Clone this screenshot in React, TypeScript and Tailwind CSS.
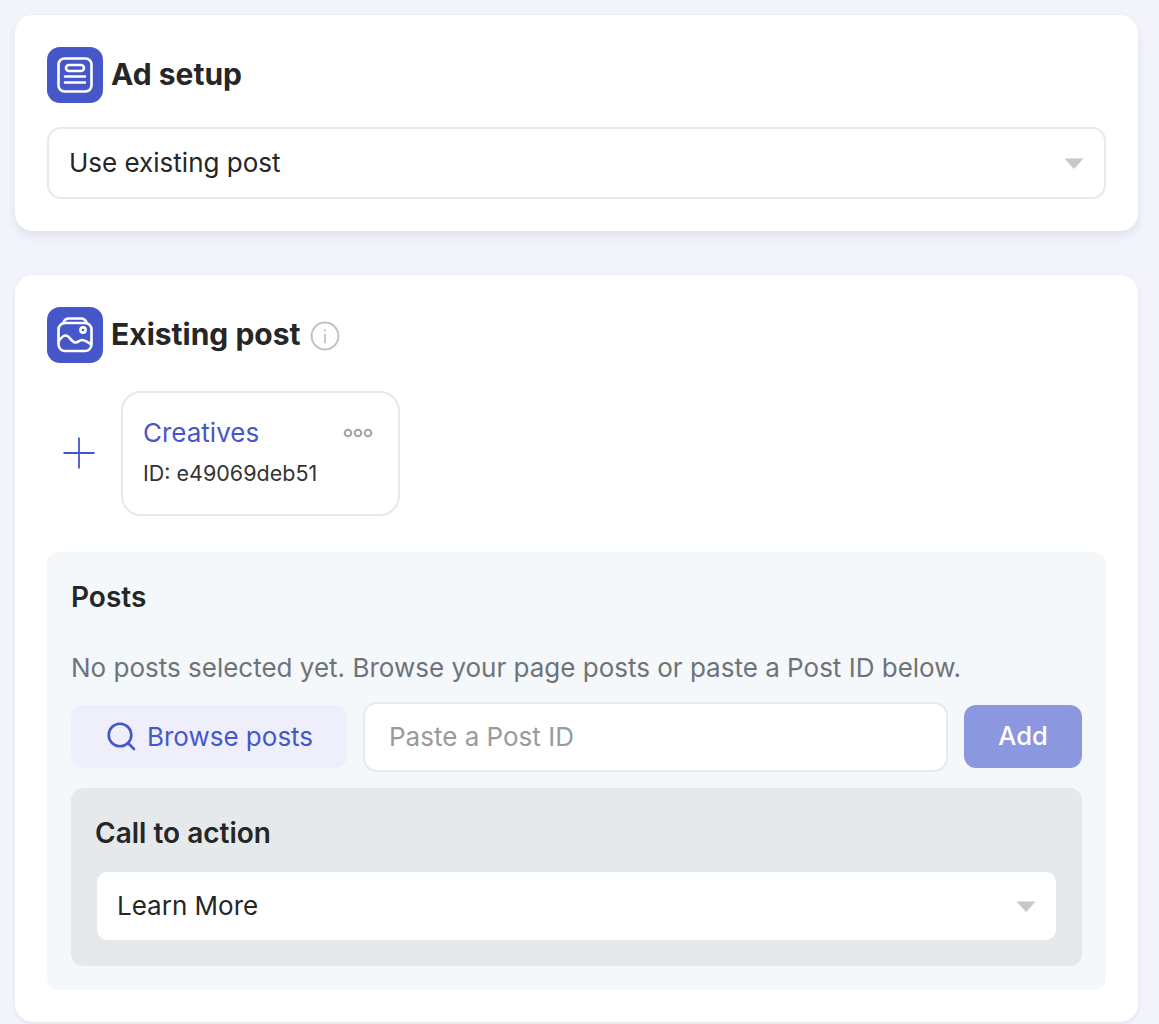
import React from "react";

const Caret = () => (
  <svg width="20" height="11" viewBox="0 0 20 11" className="block">
    <path d="M0.5 0.5H19.5L11 10Q10 11 9 10Z" fill="#c8c8c8" />
  </svg>
);

const HeaderIcon = ({ children }: { children: React.ReactNode }) => (
  <div className="flex h-14 w-14 shrink-0 items-center justify-center rounded-[13px] bg-[#4657c9]">
    <svg width="38" height="38" viewBox="0 0 38 38" fill="none" stroke="#fff" strokeWidth="2.6" strokeLinecap="round" strokeLinejoin="round">
      {children}
    </svg>
  </div>
);

export default function App() {
  return (
    <div className="min-h-[1024px] bg-[#f2f3fb] px-[15px] pt-[15px] font-['Inter',sans-serif] text-[#262626]">
      <section className="h-[216px] w-[1123px] rounded-[18px] bg-white px-8 pt-8 shadow-[0_5px_8px_rgba(40,50,90,0.09)]">
        <div className="flex items-center gap-2">
          <HeaderIcon>
            <rect x="2.5" y="2.5" width="33" height="33" rx="6" />
            <rect x="10" y="9" width="18" height="6" rx="3" />
            <path d="M9 20.5H29M9 26.5H29" />
          </HeaderIcon>
          <h2 className="mb-[2px] text-[30px] font-bold leading-9">Ad setup</h2>
        </div>
        <div className="mt-6 flex h-[72px] w-[1059px] items-center justify-between rounded-[14px] border-2 border-[#e9e9e9] pl-5 pr-5 text-[26px]">
          <span className="mb-[1px]">Use existing post</span>
          <Caret />
        </div>
      </section>

      <section className="mt-11 h-[747px] w-[1123px] rounded-[18px] bg-white px-8 pt-8 shadow-[0_2px_4px_rgba(40,50,90,0.08)]">
        <div className="flex items-center gap-2">
          <HeaderIcon>
            <path d="M7.5 6.5C8.5 3.5 10.5 2.5 13 2.5H25C27.5 2.5 29.5 3.5 30.5 6.5" />
            <rect x="2.5" y="7" width="33" height="28" rx="6.5" />
            <circle cx="27" cy="14" r="2.6" />
            <path d="M3 24.5C6 20.5 9 18.5 11.5 20C14 21.5 16 26 19 26.5C22 27 23 24 26 24C29 24 32 26.5 35 28" />
          </HeaderIcon>
          <h2 className="mb-[2px] text-[30px] font-bold leading-9">Existing post</h2>
          <svg width="30" height="30" viewBox="0 0 30 30" fill="none" className="ml-[1px] mt-[2px]">
            <circle cx="15" cy="15" r="13.4" stroke="#c4c4c4" strokeWidth="2" />
            <path d="M15 13.5V21.5" stroke="#c4c4c4" strokeWidth="1.8" strokeLinecap="round" />
            <circle cx="15" cy="9.4" r="1.2" fill="#c4c4c4" />
          </svg>
        </div>

        <div className="mt-7 flex items-center">
          <div className="mb-[2px] flex w-[74px] justify-start pl-[16px]">
            <svg width="32" height="32" viewBox="0 0 32 32" stroke="#4657c9" strokeWidth="1.8" fill="none">
              <path d="M16 0.5V31.5M0.5 16H31.5" />
            </svg>
          </div>
          <div className="h-[125px] w-[279px] rounded-[20px] border-2 border-[#e8e8e8] px-5 pt-[22px]">
            <div className="flex items-center justify-between pr-[5px]">
              <span className="text-[26px] leading-[36px] text-[#4657c9]">Creatives</span>
              <svg width="30" height="10" viewBox="0 0 30 10" fill="none" stroke="#a3a3a3" strokeWidth="2">
                <circle cx="5" cy="5" r="3.3" />
                <circle cx="15" cy="5" r="3.3" />
                <circle cx="25" cy="5" r="3.3" />
              </svg>
            </div>
            <div className="mt-[7px] text-[21.5px] leading-[30px] text-[#333333]">ID: e49069deb51</div>
          </div>
        </div>

        <div className="mt-9 h-[438px] w-[1059px] rounded-[12px] bg-[#f4f8fb] px-6 pt-6">
          <h3 className="mt-[1px] text-[28px] font-semibold leading-[40px]">Posts</h3>
          <p className="mt-[34px] text-[26px] leading-[34px] text-[#6f7378]">
            No posts selected yet. Browse your page posts or paste a Post ID below.
          </p>
          <div className="mt-[17px] flex items-start">
            <button className="mt-[3px] flex h-[63px] w-[276px] items-center justify-center gap-[11px] rounded-[12px] bg-[#eeeffb] pl-[2px] text-[26px] text-[#4657c9]">
              <svg width="29" height="29" viewBox="0 0 29 29" fill="none" stroke="#4657c9" strokeWidth="2.6" strokeLinecap="round">
                <circle cx="13" cy="13" r="11.3" />
                <path d="M21.5 21.5L27 27" />
              </svg>
              Browse posts
            </button>
            <div className="ml-4 flex h-[70px] w-[585px] items-center rounded-[14px] border-2 border-[#e9e9e9] bg-white pl-6 text-[26px] text-[#9a9a9a]">
              <span className="mb-[1px]">Paste a Post ID</span>
            </div>
            <button className="ml-4 mt-[3px] h-[63px] w-[118px] rounded-[12px] bg-[#8b98e0] text-[25.5px] font-medium text-white">
              Add
            </button>
          </div>
          <div className="mt-[16px] h-[178px] w-[1011px] rounded-[12px] bg-[#e5e9ec] px-6 pt-[25px]">
            <h3 className="text-[28px] font-semibold leading-[40px]">Call to action</h3>
            <div className="ml-[2px] mt-[19px] flex h-[68px] w-[959px] items-center justify-between rounded-[10px] bg-white pl-[20px] pr-[20px] text-[26px]">
              <span className="mb-[1px]">Learn More</span>
              <Caret />
            </div>
          </div>
        </div>
      </section>
    </div>
  );
}
